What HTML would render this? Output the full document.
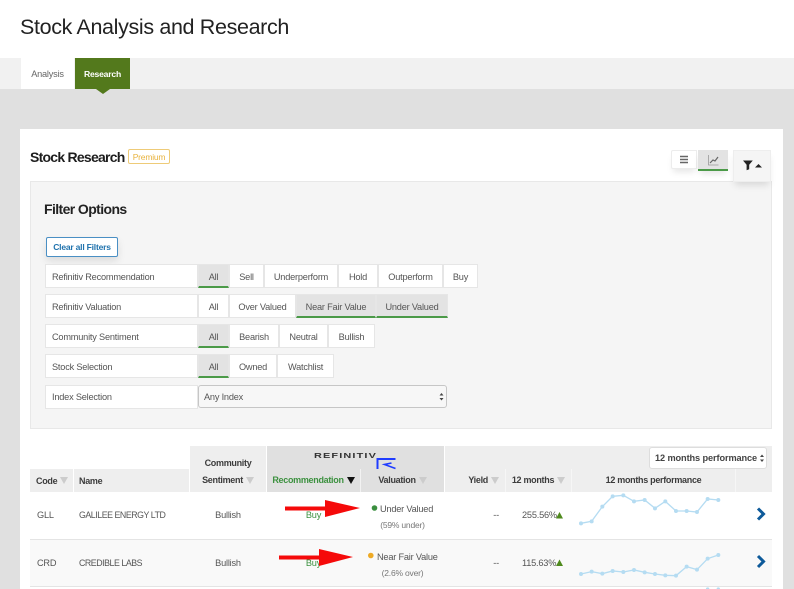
<!DOCTYPE html>
<html><head><meta charset="utf-8">
<style>
html,body{margin:0;padding:0;background:#fff}
body{width:794px;height:589px;position:relative;overflow:hidden;font-family:"Liberation Sans",sans-serif;color:#555;font-size:9.2px;letter-spacing:-.2px;filter:blur(.35px)}
.a{position:absolute;box-sizing:border-box}
.c{display:flex;align-items:center;justify-content:center;white-space:nowrap}
.l{display:flex;align-items:center;white-space:nowrap}
.lab{background:#fff;border:1px solid #e6e6e6;padding:1px 0 0 6px;left:45px;width:153px;height:24px;color:#555}
.b{background:#fff;border:1px solid #e6e6e6;height:24px;color:#555;padding-top:1px}
.on{background:#e3e3e3;border-bottom:2px solid #4b9a48;padding-top:2px}
.h{background:#eee;font-weight:bold;color:#3c3c3c}
.hb{font-weight:bold;color:#3c3c3c;font-size:9px;letter-spacing:-.3px}
.h{font-size:9px;letter-spacing:-.3px}
.t{color:#555}
.n{font-size:8.8px;letter-spacing:-.45px}
.tri{display:inline-block;width:0;height:0;border-left:4px solid transparent;border-right:4px solid transparent;border-top:7px solid #ccc;margin-left:3px}
</style></head><body>
<div class="a" style="left:20px;top:13px;font-size:21.5px;line-height:29px;color:#222;letter-spacing:-.35px;white-space:nowrap">Stock Analysis and Research</div>
<div class="a" style="left:0;top:58px;width:794px;height:31px;background:#f1f1f1"></div>
<div class="a" style="left:0;top:89px;width:794px;height:500px;background:#e0e0e0"></div>
<div class="a c" style="left:21px;top:58px;width:53px;height:31px;background:#fff;color:#666">Analysis</div>
<div class="a c" style="left:75px;top:58px;width:55px;height:31px;background:#53791c;color:#fff;font-weight:bold;font-size:8.6px">Research</div>
<div class="a" style="left:96px;top:89px;width:0;height:0;border-left:7px solid transparent;border-right:7px solid transparent;border-top:5px solid #53791c"></div>

<div class="a" style="left:20px;top:129px;width:763px;height:460px;background:#fff"></div>
<div class="a" style="left:30px;top:149px;font-size:14px;line-height:17px;font-weight:bold;color:#1d1d1d;letter-spacing:-.75px;white-space:nowrap">Stock Research</div>
<div class="a c" style="left:128px;top:149px;width:42px;height:15px;border:1px solid #eecb78;border-radius:2px;color:#e8b33f;font-size:8.5px">Premium</div>

<div class="a" style="left:30px;top:181px;width:742px;height:248px;background:#f5f5f5;border:1px solid #e8e8e8"></div>
<div class="a" style="left:671px;top:150px;width:26px;height:19px;background:#fff;border:1px solid #ececec;border-radius:2px 0 0 2px;box-shadow:0 5px 7px -2px rgba(0,0,0,.1)"></div>
<div class="a" style="left:698px;top:150px;width:30px;height:21px;background:#e3e3e3;border-bottom:2px solid #4b9a48;box-shadow:0 5px 7px -2px rgba(0,0,0,.1)"></div>
<div class="a" style="left:733px;top:150px;width:38px;height:32px;background:#f5f5f5;border:1px solid #eee;box-shadow:0 5px 7px -2px rgba(0,0,0,.12)"></div>

<div class="a" style="left:44px;top:201px;font-size:14px;line-height:17px;font-weight:bold;color:#222;letter-spacing:-.6px;white-space:nowrap">Filter Options</div>
<div class="a c" style="left:46px;top:237px;width:72px;height:20px;background:#fff;border:1px solid #4a8fc4;border-radius:2px;color:#1f72ad;font-weight:bold;font-size:8.5px;box-shadow:0 4px 8px rgba(0,0,0,.1)">Clear all Filters</div>

<div class="a l lab" style="top:264px">Refinitiv Recommendation</div>
<div class="a c b on" style="left:198px;top:264px;width:31px">All</div>
<div class="a c b" style="left:229px;top:264px;width:35px">Sell</div>
<div class="a c b" style="left:264px;top:264px;width:74px">Underperform</div>
<div class="a c b" style="left:338px;top:264px;width:40px">Hold</div>
<div class="a c b" style="left:378px;top:264px;width:65px">Outperform</div>
<div class="a c b" style="left:443px;top:264px;width:35px">Buy</div>

<div class="a l lab" style="top:294px">Refinitiv Valuation</div>
<div class="a c b" style="left:198px;top:294px;width:31px">All</div>
<div class="a c b" style="left:229px;top:294px;width:67px">Over Valued</div>
<div class="a c b on" style="left:296px;top:294px;width:80px">Near Fair Value</div>
<div class="a c b on" style="left:376px;top:294px;width:72px">Under Valued</div>

<div class="a l lab" style="top:324px">Community Sentiment</div>
<div class="a c b on" style="left:198px;top:324px;width:31px">All</div>
<div class="a c b" style="left:229px;top:324px;width:50px">Bearish</div>
<div class="a c b" style="left:279px;top:324px;width:49px">Neutral</div>
<div class="a c b" style="left:328px;top:324px;width:47px">Bullish</div>

<div class="a l lab" style="top:354px">Stock Selection</div>
<div class="a c b on" style="left:198px;top:354px;width:31px">All</div>
<div class="a c b" style="left:229px;top:354px;width:48px">Owned</div>
<div class="a c b" style="left:277px;top:354px;width:57px">Watchlist</div>

<div class="a l lab" style="top:385px;padding-top:0">Index Selection</div>
<div class="a l" style="left:198px;top:385px;width:249px;height:23px;background:#f7f7f7;border:1px solid #c6c6c6;border-radius:3px;padding-left:5px;color:#555">Any Index</div>

<!-- table header -->
<div class="a l h" style="left:30px;top:469px;width:43px;height:23px;padding-left:6px">Code<i class="tri"></i></div>
<div class="a l h" style="left:74px;top:469px;width:115px;height:23px;padding-left:5px">Name</div>
<div class="a h" style="left:190px;top:446px;width:76px;height:46px"></div>
<div class="a c hb" style="left:190px;top:456px;width:76px;height:14px">Community</div>
<div class="a c hb" style="left:190px;top:473px;width:76px;height:14px">Sentiment<i class="tri"></i></div>
<div class="a" style="left:267px;top:446px;width:177px;height:46px;background:#e0e0e0"></div>
<div class="a" style="left:360px;top:469px;width:1px;height:23px;background:#f2f2f2"></div>
<div class="a" style="left:314px;top:451px;font-size:7.5px;line-height:9px;font-weight:bold;color:#333;letter-spacing:.8px;white-space:nowrap;transform:scaleX(1.45);transform-origin:0 0">REFINITIV</div>
<div class="a c hb" style="left:267px;top:473px;width:93px;height:14px;color:#3d9140">Recommendation<i class="tri" style="border-top-color:#111"></i></div>
<div class="a c hb" style="left:361px;top:473px;width:83px;height:14px">Valuation<i class="tri"></i></div>
<div class="a" style="left:445px;top:446px;width:327px;height:46px;background:#eee"></div>
<div class="a" style="left:505px;top:469px;width:1px;height:23px;background:#f6f6f6"></div>
<div class="a" style="left:571px;top:469px;width:1px;height:23px;background:#f6f6f6"></div>
<div class="a" style="left:735px;top:469px;width:1px;height:23px;background:#f6f6f6"></div>
<div class="a l hb" style="left:445px;top:473px;width:60px;height:14px;justify-content:flex-end;padding-right:6px">Yield<i class="tri"></i></div>
<div class="a c hb" style="left:506px;top:473px;width:65px;height:14px">12 months<i class="tri"></i></div>
<div class="a c hb" style="left:572px;top:473px;width:163px;height:14px">12 months performance</div>
<div class="a l" style="left:649px;top:447px;width:118px;height:22px;background:#fff;border:1px solid #ddd;border-radius:3px;padding-left:5px;color:#444;font-weight:bold;font-size:9.2px;letter-spacing:-.1px">12 months performance</div>

<!-- rows -->
<div class="a" style="left:30px;top:539px;width:742px;height:1px;background:#e4e4e4"></div>
<div class="a" style="left:30px;top:540px;width:742px;height:46px;background:#f9f9f9"></div>
<div class="a" style="left:30px;top:586px;width:742px;height:1px;background:#e4e4e4"></div>

<div class="a l t" style="left:37px;top:508px;height:14px">GLL</div>
<div class="a l t n" style="left:79px;top:508px;height:14px">GALILEE ENERGY LTD</div>
<div class="a c t" style="left:190px;top:508px;width:76px;height:14px">Bullish</div>
<div class="a c" style="left:267px;top:508px;width:93px;height:14px;color:#3d9140">Buy</div>
<div class="a l t" style="left:380px;top:502px;height:14px;white-space:nowrap">Under Valued</div>
<div class="a c t" style="left:361px;top:518px;width:83px;height:14px;font-size:8.5px;color:#777">(59% under)</div>
<div class="a c t" style="left:445px;top:508px;width:58px;height:14px;justify-content:flex-end;padding-right:4px">--</div>
<div class="a l t" style="left:522px;top:508px;height:14px">255.56%</div>

<div class="a l t" style="left:37px;top:556px;height:14px">CRD</div>
<div class="a l t n" style="left:79px;top:556px;height:14px">CREDIBLE LABS</div>
<div class="a c t" style="left:190px;top:556px;width:76px;height:14px">Bullish</div>
<div class="a c" style="left:267px;top:556px;width:93px;height:14px;color:#3d9140">Buy</div>
<div class="a l t" style="left:377px;top:550px;height:14px;white-space:nowrap">Near Fair Value</div>
<div class="a c t" style="left:361px;top:566px;width:83px;height:14px;font-size:8.5px;color:#777">(2.6% over)</div>
<div class="a c t" style="left:445px;top:556px;width:58px;height:14px;justify-content:flex-end;padding-right:4px">--</div>
<div class="a l t" style="left:522px;top:556px;height:14px">115.63%</div>

<svg class="a" style="left:0;top:0" width="794" height="589" viewBox="0 0 794 589" fill="none">
  <!-- list icon -->
  <path d="M680 156.500h8M680 159.500h8M680 162.500h8" stroke="#666" stroke-width="1.500"/>
  <!-- chart icon -->
  <path d="M708.500 155v10h10" stroke="#999" stroke-width=".8"/>
  <path d="M710 163l3-3 2 1 3-4" stroke="#666" stroke-width="1.200"/>
  <!-- filter icon -->
  <path d="M743 160.500h9.800l-3.600 4.200v4.500l-2.600 1v-5.500z" fill="#222"/>
  <path d="M755 167.500l3.500-3.500 3.500 3.500z" fill="#222"/>
  <!-- select carets -->
  <path d="M439.500 395.500l2-2.500 2 2.500zM439.500 398l2 2.500 2-2.500z" fill="#444"/>
  <path d="M760 457l2-2.500 2 2.500zM760 459.500l2 2.500 2-2.500z" fill="#444"/>
  <!-- refinitiv logo -->
  <path d="M377.500 469v-10h18" stroke="#1f3cff" stroke-width="2"/>
  <path d="M395.500 468.500l-11-4 7-1.500" stroke="#1f3cff" stroke-width="1.600"/>
  <!-- dots -->
  <circle cx="374.500" cy="508" r="2.800" fill="#3b8f3f"/>
  <circle cx="370.800" cy="555.500" r="2.800" fill="#eeaa25"/>
  <!-- red arrows -->
  <path d="M285 506.500h41v4h-41z" fill="#f50a0a"/>
  <path d="M325 500l35 8-35 9z" fill="#f50a0a"/>
  <path d="M279 555.500h41v4h-41z" fill="#f50a0a"/>
  <path d="M319 549l34 8-34 9z" fill="#f50a0a"/>
  <!-- up triangles -->
  <path d="M556 518.500l3.500-6.500 3.500 6.500z" fill="#4f8a1d"/>
  <path d="M556 566l3.500-6.500 3.500 6.500z" fill="#4f8a1d"/>
  <!-- sparklines -->
  <g transform="translate(490 440) scale(.3333)" stroke="#b5dcf2" stroke-width="4" fill="#b5dcf2">
    <polyline fill="none" points="273,250 305,244 337,200 368,169 400,166 432,184 464,180 495,205 526,184 558,213 590,213 621,216 653,177 685,180"/>
    <g stroke="none">
      <circle cx="273" cy="250" r="6"/><circle cx="305" cy="244" r="6"/><circle cx="337" cy="200" r="6"/><circle cx="368" cy="169" r="6"/><circle cx="400" cy="166" r="6"/><circle cx="432" cy="184" r="6"/><circle cx="464" cy="180" r="6"/><circle cx="495" cy="205" r="6"/><circle cx="526" cy="184" r="6"/><circle cx="558" cy="213" r="6"/><circle cx="590" cy="213" r="6"/><circle cx="621" cy="216" r="6"/><circle cx="653" cy="177" r="6"/><circle cx="685" cy="180" r="6"/>
    </g>
    <polyline fill="none" points="273,402 305,395 337,401 368,393 400,396 432,390 464,397 495,402 526,406 558,407 590,380 621,389 653,356 685,345"/>
    <g stroke="none">
      <circle cx="273" cy="402" r="6"/><circle cx="305" cy="395" r="6"/><circle cx="337" cy="401" r="6"/><circle cx="368" cy="393" r="6"/><circle cx="400" cy="396" r="6"/><circle cx="432" cy="390" r="6"/><circle cx="464" cy="397" r="6"/><circle cx="495" cy="402" r="6"/><circle cx="526" cy="406" r="6"/><circle cx="558" cy="407" r="6"/><circle cx="590" cy="380" r="6"/><circle cx="621" cy="389" r="6"/><circle cx="653" cy="356" r="6"/><circle cx="685" cy="345" r="6"/>
    </g>
    <circle cx="653" cy="447" r="5" stroke="none"/><circle cx="685" cy="447" r="5" stroke="none"/>
  </g>
  <!-- chevrons -->
  <path d="M758 508.500l5.500 5.500-5.500 5.500" stroke="#0d5a9a" stroke-width="3"/>
  <path d="M758 556l5.500 5.500-5.500 5.500" stroke="#0d5a9a" stroke-width="3"/>
</svg>
</body></html>
